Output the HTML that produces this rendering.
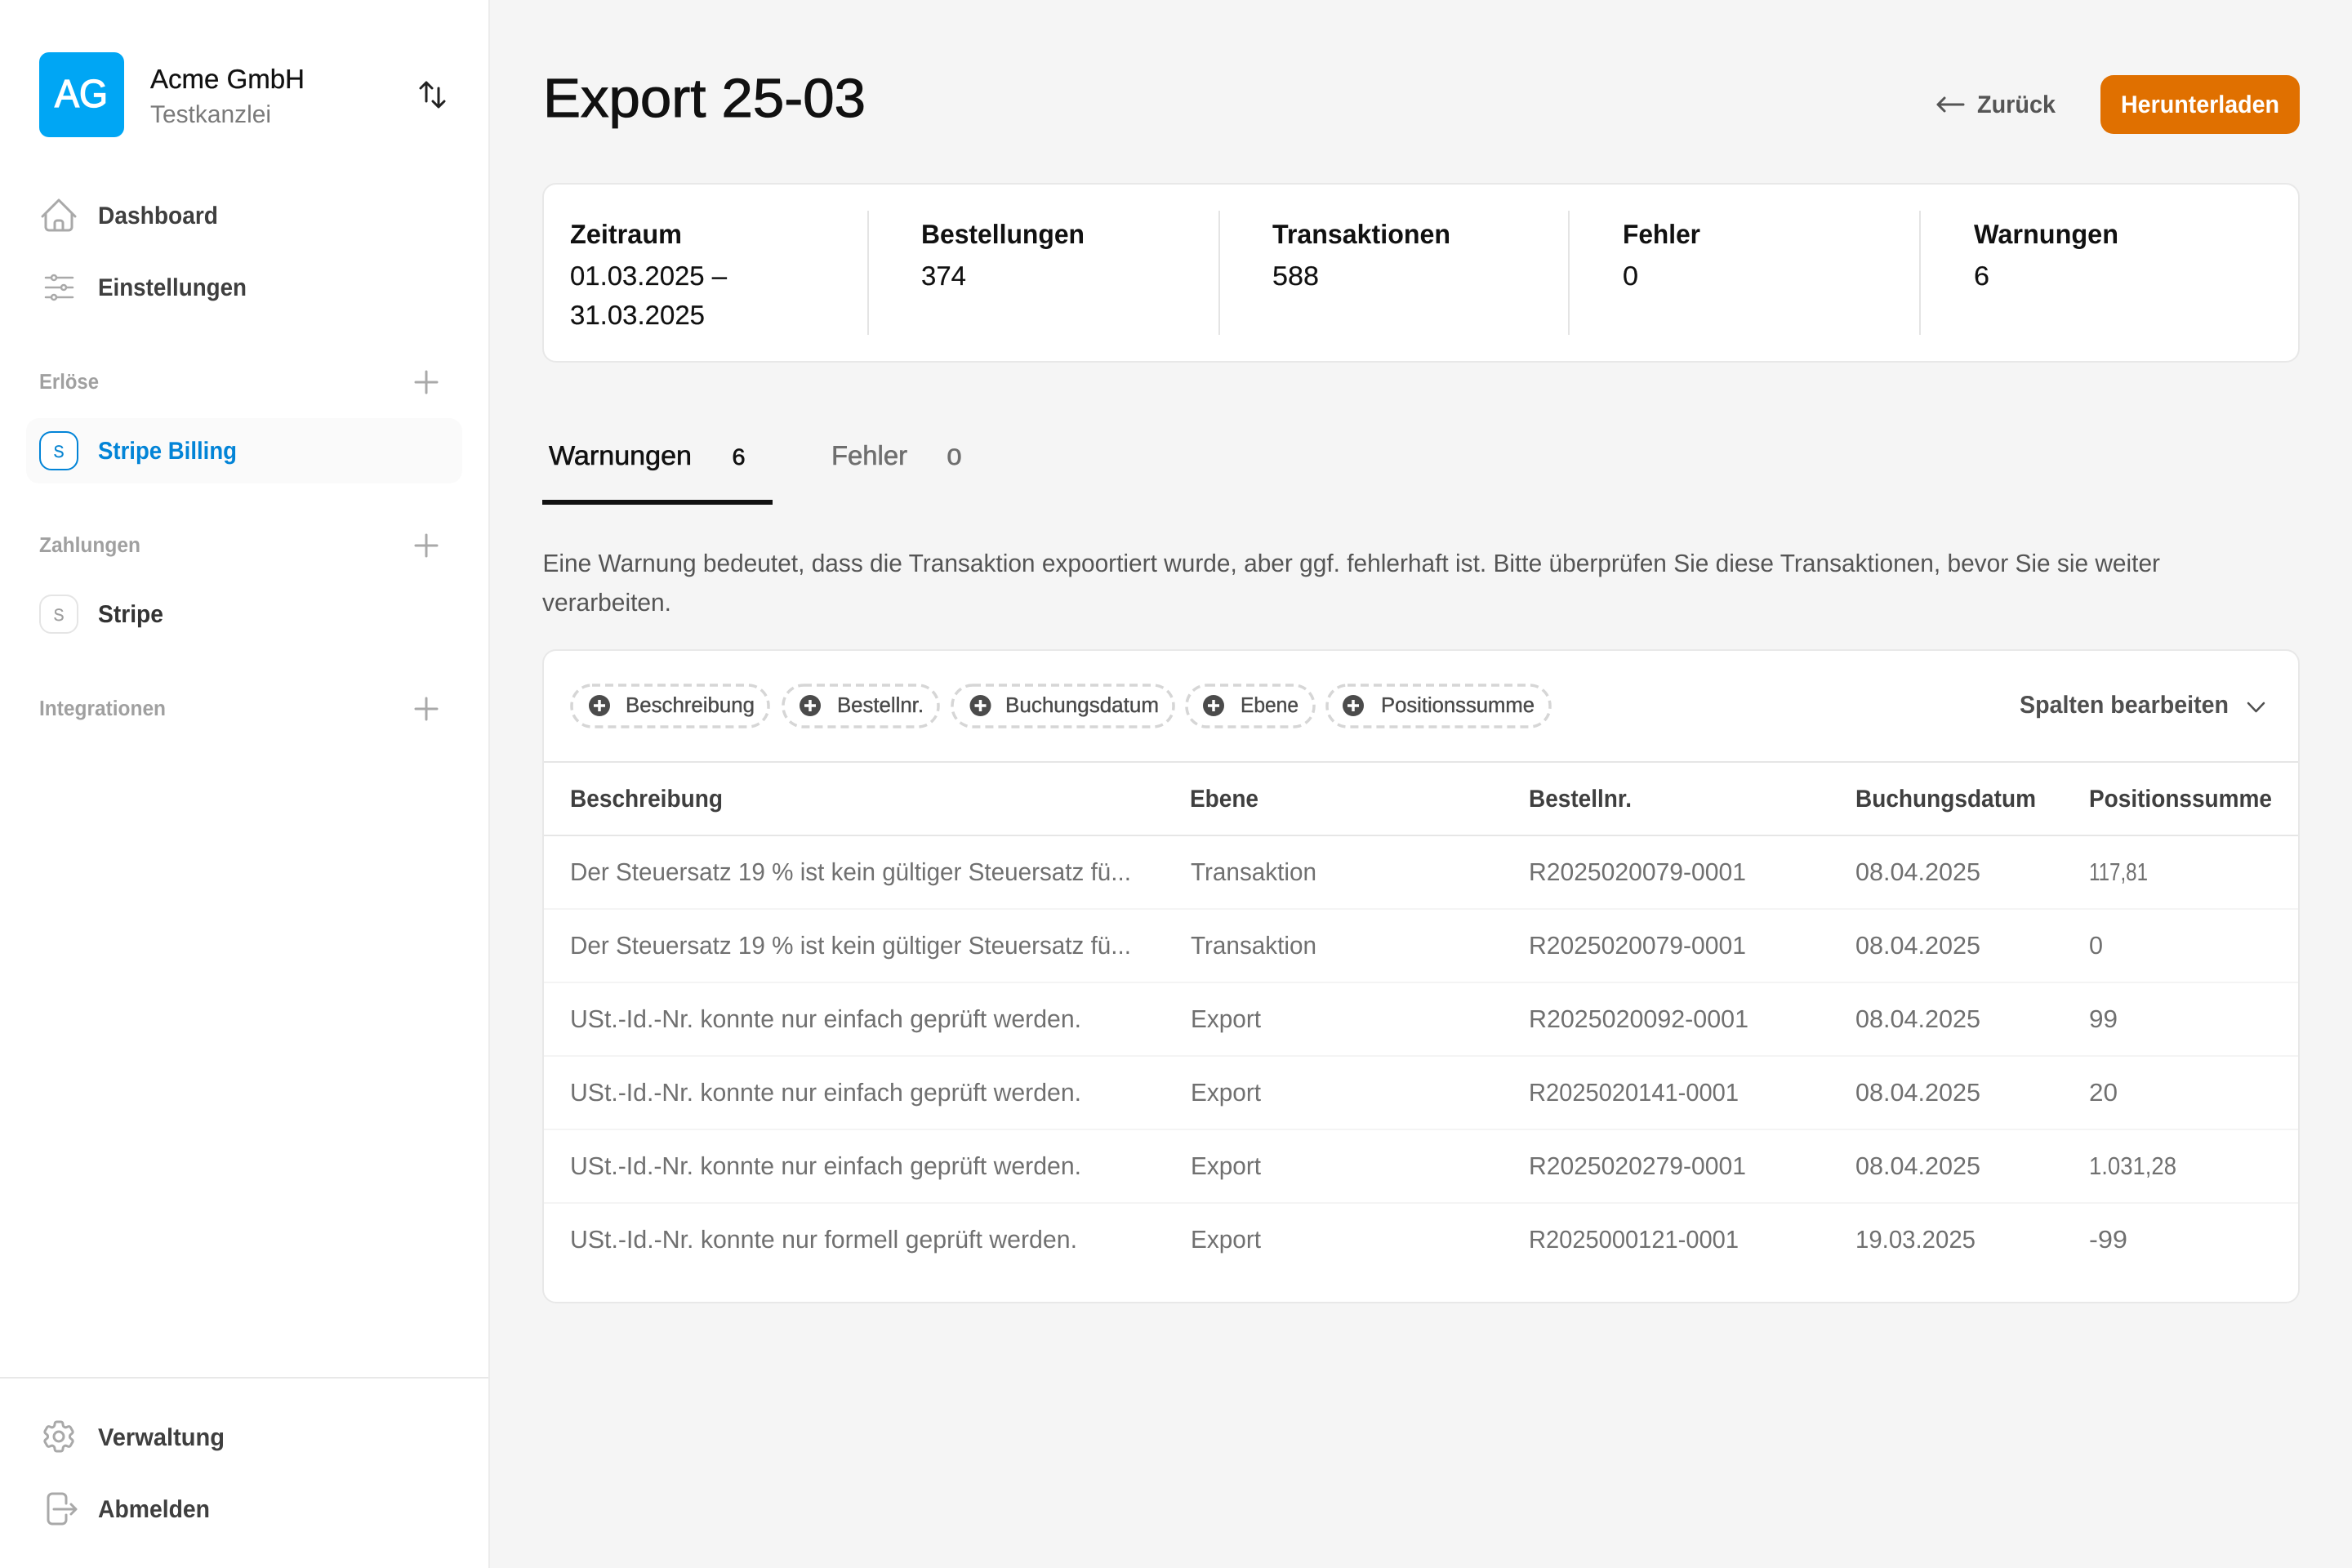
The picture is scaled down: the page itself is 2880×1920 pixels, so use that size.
<!DOCTYPE html>
<html lang="de"><head><meta charset="utf-8"><title>Export 25-03</title>
<style>
html,body{margin:0;padding:0;background:#f5f5f5;width:2880px;height:1920px;overflow:hidden}
svg{display:block}
text{font-family:"Liberation Sans",Arial,sans-serif;text-rendering:geometricPrecision;white-space:pre}
.b{font-weight:700}
</style></head><body>
<svg xmlns="http://www.w3.org/2000/svg" width="2880" height="1920" viewBox="0 0 2880 1920">
<rect width="2880" height="1920" fill="#f5f5f5"/>
<!-- Sidebar -->
<rect width="598" height="1920" fill="#fff"/>
<rect x="598" width="2" height="1920" fill="#ececec"/>
<rect y="1686" width="598" height="2" fill="#e8e8e8"/>
<rect x="48" y="64" width="104" height="104" rx="12" fill="#00a6f4"/>
<text x="67" y="131" font-size="48" textLength="65" lengthAdjust="spacingAndGlyphs" fill="#fff" stroke="#fff" stroke-width="1.3">AG</text>
<text x="184" y="108" font-size="33" textLength="189" lengthAdjust="spacingAndGlyphs" fill="#111" stroke="#111" stroke-width=".3">Acme GmbH</text>
<text x="184" y="150" font-size="30" textLength="148" lengthAdjust="spacingAndGlyphs" fill="#7a7a7a">Testkanzlei</text>
<g fill="none" stroke="#222" stroke-width="3" stroke-linecap="round" stroke-linejoin="round">
<path d="M522 101V124M515 108L522 101L529 108"/>
<path d="M537 108V131M530 124L537 131L544 124"/>
</g>
<!-- nav icons -->
<g fill="none" stroke="#a9a9a9" stroke-width="3" stroke-linecap="round" stroke-linejoin="round">
<path d="M52 265L72 245L92 265"/>
<path d="M56 262V278a4 4 0 0 0 4 4H84a4 4 0 0 0 4-4V262"/>
<path d="M67 282V273a3 3 0 0 1 3-3h4a3 3 0 0 1 3 3v9"/>
<path stroke-width="2.5" d="M56 340H63M69 340H89M56 352H75M81 352H89M56 364H63M69 364H89"/>
<circle cx="66" cy="340" r="3" stroke-width="2.5"/><circle cx="78" cy="352" r="3" stroke-width="2.5"/><circle cx="66" cy="364" r="3" stroke-width="2.5"/>
<path d="M522 455V481M509 468H535"/>
<path d="M522 655V681M509 668H535"/>
<path d="M522 855V881M509 868H535"/>
<g transform="translate(48 1735) scale(2)"><path stroke-width="1.5" d="M9.594 3.94c.09-.542.56-.94 1.11-.94h2.593c.55 0 1.02.398 1.11.94l.213 1.281c.063.374.313.686.645.87.074.04.147.083.22.127.325.196.72.257 1.075.124l1.217-.456a1.125 1.125 0 0 1 1.37.49l1.296 2.247a1.125 1.125 0 0 1-.26 1.431l-1.003.827c-.293.241-.438.613-.43.992a7.723 7.723 0 0 1 0 .255c-.008.378.137.75.43.991l1.004.827c.424.35.534.955.26 1.43l-1.298 2.247a1.125 1.125 0 0 1-1.369.491l-1.217-.456c-.355-.133-.75-.072-1.076.124a6.47 6.47 0 0 1-.22.128c-.331.183-.581.495-.644.869l-.213 1.281c-.09.543-.56.94-1.11.94h-2.594c-.55 0-1.019-.398-1.11-.94l-.213-1.281c-.062-.374-.312-.686-.644-.87a6.52 6.52 0 0 1-.22-.127c-.325-.196-.72-.257-1.076-.124l-1.217.456a1.125 1.125 0 0 1-1.369-.49l-1.297-2.247a1.125 1.125 0 0 1 .26-1.431l1.004-.827c.292-.24.437-.613.43-.991a6.932 6.932 0 0 1 0-.255c.007-.38-.138-.751-.43-.992l-1.004-.827a1.125 1.125 0 0 1-.26-1.43l1.297-2.247a1.125 1.125 0 0 1 1.37-.491l1.216.456c.356.133.751.072 1.076-.124.072-.044.146-.086.22-.128.332-.183.582-.495.644-.869l.214-1.28Z"/><circle cx="12" cy="12" r="3" stroke-width="1.5"/></g>
<path d="M81 1841V1834a5 5 0 0 0-5-5H64a5 5 0 0 0-5 5V1861a5 5 0 0 0 5 5H76a5 5 0 0 0 5-5V1855"/>
<path d="M66 1848H92M87 1842L93 1848L87 1854"/>
</g>
<g class="b" font-size="30" fill="#3f3f3f">
<text x="120" y="274" textLength="147" lengthAdjust="spacingAndGlyphs">Dashboard</text>
<text x="120" y="362" textLength="182" lengthAdjust="spacingAndGlyphs">Einstellungen</text>
<text x="120" y="1770" textLength="155" lengthAdjust="spacingAndGlyphs">Verwaltung</text>
<text x="120" y="1858" textLength="137" lengthAdjust="spacingAndGlyphs">Abmelden</text>
<text x="120" y="762" textLength="80" lengthAdjust="spacingAndGlyphs" fill="#333">Stripe</text>
</g>
<g class="b" font-size="26" fill="#a0a0a0">
<text x="48" y="476" textLength="73" lengthAdjust="spacingAndGlyphs">Erlöse</text>
<text x="48" y="676" textLength="124" lengthAdjust="spacingAndGlyphs">Zahlungen</text>
<text x="48" y="876" textLength="155" lengthAdjust="spacingAndGlyphs">Integrationen</text>
</g>
<rect x="32" y="512" width="534" height="80" rx="16" fill="#fafafa"/>
<rect x="49" y="529" width="46" height="46" rx="14" fill="#fff" stroke="#0284d7" stroke-width="2"/>
<text x="65.5" y="560" font-size="21" textLength="13" lengthAdjust="spacingAndGlyphs" fill="#0a85d1" stroke="#0a85d1" stroke-width=".3">S</text>
<text class="b" x="120" y="562" font-size="30" textLength="170" lengthAdjust="spacingAndGlyphs" fill="#0284d7">Stripe Billing</text>
<rect x="49" y="729" width="46" height="46" rx="14" fill="#fff" stroke="#e5e5e5" stroke-width="2"/>
<text x="65.5" y="760" font-size="21" textLength="13" lengthAdjust="spacingAndGlyphs" fill="#9e9e9e" stroke="#9e9e9e" stroke-width=".3">S</text>

<!-- Header -->
<text x="665" y="143" font-size="67" textLength="395" lengthAdjust="spacingAndGlyphs" fill="#111" stroke="#111" stroke-width="1">Export 25-03</text>
<path d="M2373 128H2404M2381 120L2373 128L2381 136" fill="none" stroke="#555" stroke-width="3" stroke-linecap="round" stroke-linejoin="round"/>
<text class="b" x="2421" y="138" font-size="30" textLength="96" lengthAdjust="spacingAndGlyphs" fill="#555">Zurück</text>
<rect x="2572" y="92" width="244" height="72" rx="16" fill="#e07000"/>
<text class="b" x="2597" y="138" font-size="30" textLength="194" lengthAdjust="spacingAndGlyphs" fill="#fff">Herunterladen</text>

<!-- Stats -->
<rect x="665" y="225" width="2150" height="218" rx="16" fill="#fff" stroke="#e8e8e8" stroke-width="2"/>
<g fill="#e4e4e4">
<rect x="1062" y="258" width="2" height="152"/><rect x="1492" y="258" width="2" height="152"/><rect x="1920" y="258" width="2" height="152"/><rect x="2350" y="258" width="2" height="152"/>
</g>
<g class="b" font-size="33" fill="#111">
<text x="698" y="298" textLength="137" lengthAdjust="spacingAndGlyphs">Zeitraum</text>
<text x="1128" y="298" textLength="200" lengthAdjust="spacingAndGlyphs">Bestellungen</text>
<text x="1558" y="298" textLength="218" lengthAdjust="spacingAndGlyphs">Transaktionen</text>
<text x="1987" y="298" textLength="95" lengthAdjust="spacingAndGlyphs">Fehler</text>
<text x="2417" y="298" textLength="177" lengthAdjust="spacingAndGlyphs">Warnungen</text>
</g>
<g font-size="33" fill="#111" stroke="#111" stroke-width=".2">
<text x="698" y="349" textLength="192" lengthAdjust="spacingAndGlyphs">01.03.2025 –</text>
<text x="698" y="397" textLength="165" lengthAdjust="spacingAndGlyphs">31.03.2025</text>
<text x="1128" y="349" textLength="55" lengthAdjust="spacingAndGlyphs">374</text>
<text x="1558" y="349" textLength="57" lengthAdjust="spacingAndGlyphs">588</text>
<text x="1987" y="349" textLength="19" lengthAdjust="spacingAndGlyphs">0</text>
<text x="2417" y="349" textLength="19" lengthAdjust="spacingAndGlyphs">6</text>
</g>

<!-- Tabs -->
<text x="672" y="569" font-size="33" textLength="175" lengthAdjust="spacingAndGlyphs" fill="#111" stroke="#111" stroke-width=".6">Warnungen</text>
<text x="896.5" y="569" font-size="28" textLength="16" lengthAdjust="spacingAndGlyphs" fill="#111" stroke="#111" stroke-width=".7">6</text>
<text x="1018" y="569" font-size="33" textLength="93" lengthAdjust="spacingAndGlyphs" fill="#6f6f6f" stroke="#6f6f6f" stroke-width=".6">Fehler</text>
<text x="1159.5" y="569" font-size="28" textLength="18" lengthAdjust="spacingAndGlyphs" fill="#6f6f6f" stroke="#6f6f6f" stroke-width=".7">0</text>
<rect x="664" y="612" width="282" height="6" fill="#111"/>
<text x="664.5" y="700" font-size="30.5" textLength="1980.5" lengthAdjust="spacingAndGlyphs" fill="#555">Eine Warnung bedeutet, dass die Transaktion expoortiert wurde, aber ggf. fehlerhaft ist. Bitte überprüfen Sie diese Transaktionen, bevor Sie sie weiter</text>
<text x="664" y="748" font-size="30.5" textLength="158" lengthAdjust="spacingAndGlyphs" fill="#555">verarbeiten.</text>

<!-- Table card -->
<rect x="665" y="796" width="2150" height="799" rx="16" fill="#fff" stroke="#e8e8e8" stroke-width="2"/>
<g fill="#fff" stroke="#d6d6d6" stroke-width="3.5" stroke-dasharray="10 6">
<rect x="700" y="839" width="241" height="51" rx="25"/>
<rect x="959" y="839" width="190" height="51" rx="25"/>
<rect x="1166" y="839" width="271" height="51" rx="25"/>
<rect x="1453" y="839" width="156" height="51" rx="25"/>
<rect x="1625" y="839" width="273" height="51" rx="25"/>
</g>
<g fill="#4b4b4b">
<circle cx="734" cy="864" r="13"/><circle cx="992" cy="864" r="13"/><circle cx="1200.5" cy="864" r="13"/><circle cx="1486" cy="864" r="13"/><circle cx="1657" cy="864" r="13"/>
</g>
<g stroke="#fff" stroke-width="3.5" fill="none">
<path d="M734 857V871M727 864H741"/><path d="M992 857V871M985 864H999"/><path d="M1200.5 857V871M1193.5 864H1207.5"/><path d="M1486 857V871M1479 864H1493"/><path d="M1657 857V871M1650 864H1664"/>
</g>
<g font-size="26" fill="#4a4a4a" stroke="#4a4a4a" stroke-width=".4">
<text x="766" y="872" textLength="158" lengthAdjust="spacingAndGlyphs">Beschreibung</text>
<text x="1025" y="872" textLength="106" lengthAdjust="spacingAndGlyphs">Bestellnr.</text>
<text x="1231" y="872" textLength="188" lengthAdjust="spacingAndGlyphs">Buchungsdatum</text>
<text x="1519" y="872" textLength="71" lengthAdjust="spacingAndGlyphs">Ebene</text>
<text x="1691" y="872" textLength="188" lengthAdjust="spacingAndGlyphs">Positionssumme</text>
</g>
<text class="b" x="2473" y="873" font-size="30" textLength="256" lengthAdjust="spacingAndGlyphs" fill="#4f4f4f">Spalten bearbeiten</text>
<path d="M2753 861L2762.5 871L2772 861" fill="none" stroke="#4f4f4f" stroke-width="2.5" stroke-linecap="round" stroke-linejoin="round"/>
<rect x="666" y="932" width="2148" height="2" fill="#e6e6e6"/>
<rect x="666" y="1022" width="2148" height="2" fill="#e6e6e6"/>
<g fill="#f4f4f4">
<rect x="666" y="1112" width="2148" height="2"/><rect x="666" y="1202" width="2148" height="2"/><rect x="666" y="1292" width="2148" height="2"/><rect x="666" y="1382" width="2148" height="2"/><rect x="666" y="1472" width="2148" height="2"/>
</g>
<g class="b" font-size="30" fill="#3f3f3f">
<text x="698" y="988" textLength="187" lengthAdjust="spacingAndGlyphs">Beschreibung</text>
<text x="1457" y="988" textLength="84" lengthAdjust="spacingAndGlyphs">Ebene</text>
<text x="1872" y="988" textLength="126" lengthAdjust="spacingAndGlyphs">Bestellnr.</text>
<text x="2272" y="988" textLength="221" lengthAdjust="spacingAndGlyphs">Buchungsdatum</text>
<text x="2558" y="988" textLength="224" lengthAdjust="spacingAndGlyphs">Positionssumme</text>
</g>
<g font-size="30.5" fill="#707070">
<text x="698" y="1078" textLength="687" lengthAdjust="spacingAndGlyphs">Der Steuersatz 19 % ist kein gültiger Steuersatz fü...</text>
<text x="1458" y="1078" textLength="154" lengthAdjust="spacingAndGlyphs">Transaktion</text>
<text x="1872" y="1078" textLength="266" lengthAdjust="spacingAndGlyphs">R2025020079-0001</text>
<text x="2272" y="1078" textLength="153" lengthAdjust="spacingAndGlyphs">08.04.2025</text>
<text x="2558" y="1078" textLength="72" lengthAdjust="spacingAndGlyphs">117,81</text>

<text x="698" y="1168" textLength="687" lengthAdjust="spacingAndGlyphs">Der Steuersatz 19 % ist kein gültiger Steuersatz fü...</text>
<text x="1458" y="1168" textLength="154" lengthAdjust="spacingAndGlyphs">Transaktion</text>
<text x="1872" y="1168" textLength="266" lengthAdjust="spacingAndGlyphs">R2025020079-0001</text>
<text x="2272" y="1168" textLength="153" lengthAdjust="spacingAndGlyphs">08.04.2025</text>
<text x="2558" y="1168" textLength="17" lengthAdjust="spacingAndGlyphs">0</text>

<text x="698" y="1258" textLength="626" lengthAdjust="spacingAndGlyphs">USt.-Id.-Nr. konnte nur einfach geprüft werden.</text>
<text x="1458" y="1258" textLength="86" lengthAdjust="spacingAndGlyphs">Export</text>
<text x="1872" y="1258" textLength="269" lengthAdjust="spacingAndGlyphs">R2025020092-0001</text>
<text x="2272" y="1258" textLength="153" lengthAdjust="spacingAndGlyphs">08.04.2025</text>
<text x="2558" y="1258" textLength="35" lengthAdjust="spacingAndGlyphs">99</text>

<text x="698" y="1348" textLength="626" lengthAdjust="spacingAndGlyphs">USt.-Id.-Nr. konnte nur einfach geprüft werden.</text>
<text x="1458" y="1348" textLength="86" lengthAdjust="spacingAndGlyphs">Export</text>
<text x="1872" y="1348" textLength="257" lengthAdjust="spacingAndGlyphs">R2025020141-0001</text>
<text x="2272" y="1348" textLength="153" lengthAdjust="spacingAndGlyphs">08.04.2025</text>
<text x="2558" y="1348" textLength="35" lengthAdjust="spacingAndGlyphs">20</text>

<text x="698" y="1438" textLength="626" lengthAdjust="spacingAndGlyphs">USt.-Id.-Nr. konnte nur einfach geprüft werden.</text>
<text x="1458" y="1438" textLength="86" lengthAdjust="spacingAndGlyphs">Export</text>
<text x="1872" y="1438" textLength="266" lengthAdjust="spacingAndGlyphs">R2025020279-0001</text>
<text x="2272" y="1438" textLength="153" lengthAdjust="spacingAndGlyphs">08.04.2025</text>
<text x="2558" y="1438" textLength="107" lengthAdjust="spacingAndGlyphs">1.031,28</text>

<text x="698" y="1528" textLength="621" lengthAdjust="spacingAndGlyphs">USt.-Id.-Nr. konnte nur formell geprüft werden.</text>
<text x="1458" y="1528" textLength="86" lengthAdjust="spacingAndGlyphs">Export</text>
<text x="1872" y="1528" textLength="257" lengthAdjust="spacingAndGlyphs">R2025000121-0001</text>
<text x="2272" y="1528" textLength="147" lengthAdjust="spacingAndGlyphs">19.03.2025</text>
<text x="2558" y="1528" textLength="47" lengthAdjust="spacingAndGlyphs">-99</text>
</g>
</svg>
</body></html>
